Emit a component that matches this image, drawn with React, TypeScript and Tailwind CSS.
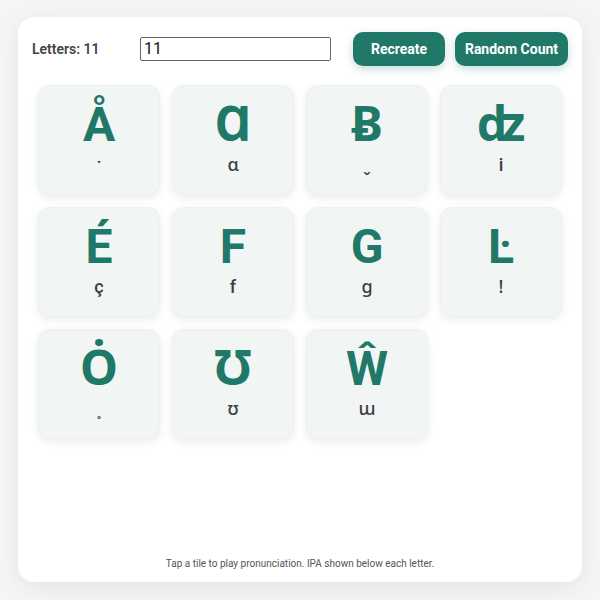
import React from 'react';

interface Tile {
  letter: string;
  ipa: string;
}

const tiles: Tile[] = [
  { letter: 'Å', ipa: 'ˑ' },
  { letter: 'Ɑ', ipa: 'ɑ' },
  { letter: 'Ƀ', ipa: 'ˬ' },
  { letter: 'ʣ', ipa: 'i' },
  { letter: 'É', ipa: 'ç' },
  { letter: 'F', ipa: 'f' },
  { letter: 'G', ipa: 'ɡ' },
  { letter: 'Ŀ', ipa: 'ǃ' },
  { letter: 'Ȯ', ipa: '˳' },
  { letter: 'Ʊ', ipa: 'ʊ' },
  { letter: 'Ŵ', ipa: 'ɯ' },
];

export default function App() {
  return (
    <div className="min-h-[600px] w-[600px] bg-[#f4f5f5] pt-[17px] px-[18px] font-['Roboto','Noto_Sans','DejaVu_Sans',sans-serif]">
      <div className="h-[565px] bg-white rounded-2xl shadow-[0_6px_24px_rgba(0,0,0,0.07)] flex flex-col px-[14px] pt-[15px] pb-[11px]">
        {/* header */}
        <div className="flex items-center h-[34px]">
          <span className="w-[108px] text-[14px] font-semibold text-[#444]">Letters: 11</span>
          <input
            defaultValue="11"
            className="w-[191px] h-[24px] border border-[#666] rounded-[2px] px-[3px] text-[16px] text-[#111] outline-none"
          />
          <div className="ml-auto flex gap-[10px]">
            <button className="w-[92px] h-[34px] rounded-[10px] bg-[#1f7868] text-white text-[14px] font-bold shadow-[0_3px_8px_rgba(31,120,104,0.25)]">
              Recreate
            </button>
            <button className="w-[113px] h-[34px] rounded-[10px] bg-[#1f7868] text-white text-[14px] font-bold shadow-[0_3px_8px_rgba(31,120,104,0.25)]">
              Random Count
            </button>
          </div>
        </div>

        {/* tiles */}
        <div className="grid grid-cols-4 gap-3 px-[6px] mt-[19px]">
          {tiles.map((t, i) => (
            <div
              key={i}
              className="h-[110px] rounded-xl bg-[#f1f5f4] border border-[#edf2f0] shadow-[0_3px_8px_rgba(0,0,0,0.08)] flex flex-col items-center pt-[15px]"
            >
              <div className="text-[48px] leading-[48px] font-bold text-[#1f7868]">{t.letter}</div>
              <div className="mt-[2px] text-[18px] leading-7 font-medium text-[#3d3d45]">{t.ipa}</div>
            </div>
          ))}
        </div>

        <p className="mt-auto text-center text-[10px] text-[#555]">
          Tap a tile to play pronunciation. IPA shown below each letter.
        </p>
      </div>
    </div>
  );
}
